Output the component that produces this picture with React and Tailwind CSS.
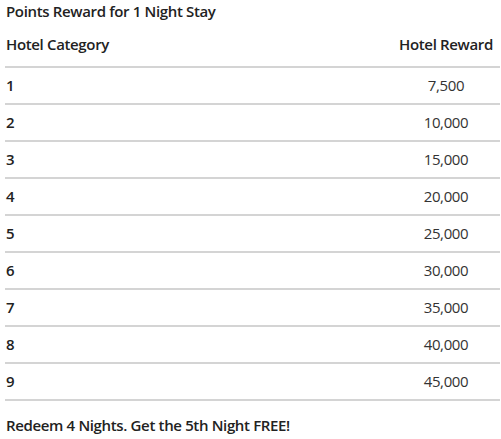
const rewards = [
  ["1", "7,500"],
  ["2", "10,000"],
  ["3", "15,000"],
  ["4", "20,000"],
  ["5", "25,000"],
  ["6", "30,000"],
  ["7", "35,000"],
  ["8", "40,000"],
  ["9", "45,000"],
];

export default function App() {
  return (
    <div className="w-[501px] h-[439px] bg-white text-[#222] font-['Open_Sans',sans-serif] text-[15px] tracking-[-0.35px]">
      <div className="h-[23px] flex items-center pl-[6px] font-semibold">
        Points Reward for 1 Night Stay
      </div>

      <div className="ml-[5px] w-[495px]">
        <div className="h-[45px] flex items-center border-b-2 border-[#d4d4d4] font-semibold">
          <div className="flex-1 pl-[1px]">Hotel Category</div>
          <div className="w-[100px] mr-[4px] text-center">Hotel Reward</div>
        </div>
        {rewards.map(([cat, pts]) => (
          <div
            key={cat}
            className="h-[37px] flex items-center border-b-2 border-[#d4d4d4]"
          >
            <div className="flex-1 pl-[1px] font-semibold">{cat}</div>
            <div className="w-[100px] mr-[4px] text-center text-[#333]">
              {pts}
            </div>
          </div>
        ))}
      </div>

      <div className="h-[48px] flex items-center pl-[6px] font-semibold">
        Redeem 4 Nights. Get the 5th Night FREE!
      </div>
    </div>
  );
}
